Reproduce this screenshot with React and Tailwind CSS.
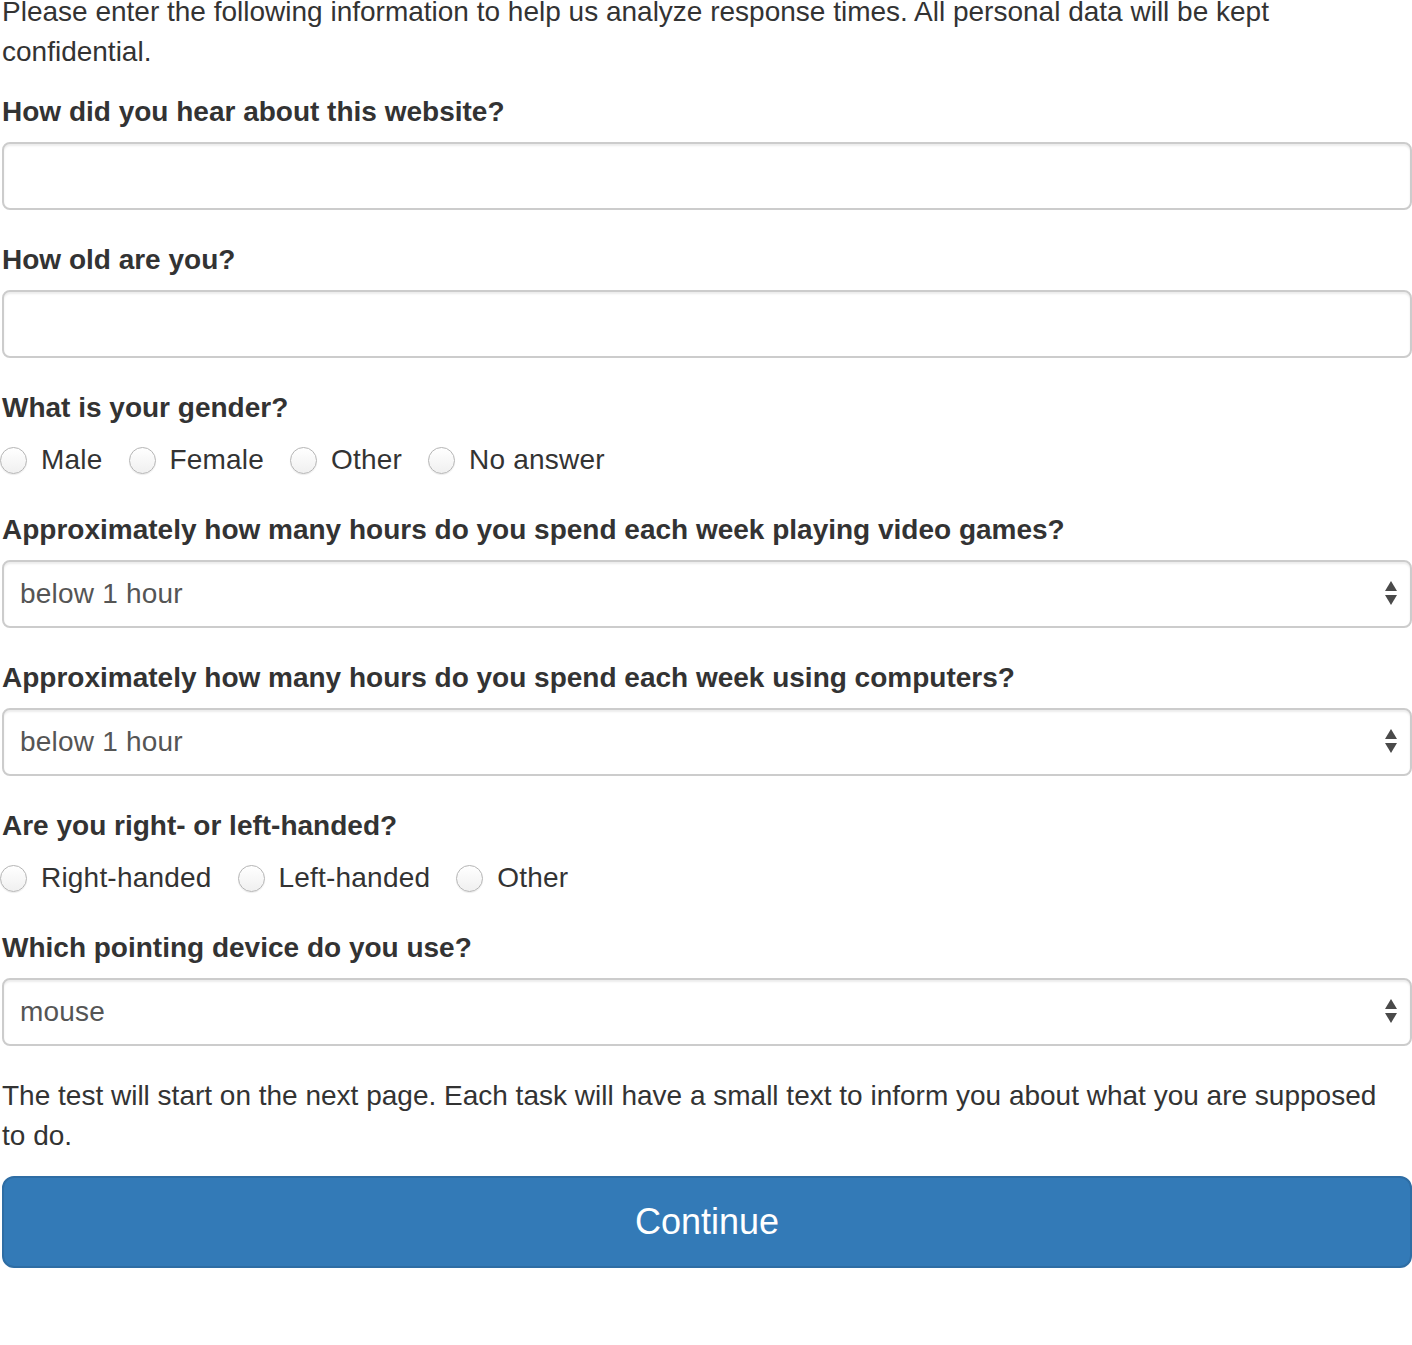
import React from "react";

const font = { fontFamily: '"Liberation Sans", Arial, Helvetica, sans-serif' };

function Label({ children }) {
  return (
    <div className="font-bold text-[28px] leading-[40px] text-[#333] mb-[10px]">{children}</div>
  );
}

function TextInput() {
  return (
    <div className="h-[68px] w-full rounded-[8px] border-2 border-[#ccc] bg-white shadow-[inset_0_2px_2px_rgba(0,0,0,0.075)]" />
  );
}

function Select({ value }) {
  return (
    <div className="h-[68px] w-full rounded-[8px] border-2 border-[#ccc] bg-white flex items-center justify-between pl-[16px] pr-[12px] shadow-[inset_0_2px_2px_rgba(0,0,0,0.075)]">
      <span className="text-[28px] leading-[40px] text-[#555] tracking-[0.2px]">{value}</span>
      <svg width="14" height="26" viewBox="0 0 14 26" className="mt-[-2px]">
        <path d="M7 1 L13 11 L1 11 Z" fill="#4a4a4a" />
        <path d="M1 15 L13 15 L7 25 Z" fill="#4a4a4a" />
      </svg>
    </div>
  );
}

function Radio({ label, first }) {
  return (
    <label className={"flex items-center " + (first ? "" : "ml-[26px]")}>
      <span className="w-[27px] h-[27px] rounded-full border border-[#b5b5b5] bg-gradient-to-b from-white to-[#f0f0f0] shadow-[0_1px_1px_rgba(0,0,0,0.08)]" />
      <span className="ml-[14px] text-[28px] leading-[40px] text-[#333] tracking-[0.2px]">{label}</span>
    </label>
  );
}

export default function App() {
  return (
    <div style={font} className="bg-white w-[1412px] h-[1345px] overflow-hidden text-[#333]">
      <div className="pl-[2px] mt-[-8px]">
        <p className="text-[28px] leading-[40px] mb-[20px] pr-[10px]">
          Please enter the following information to help us analyze response times. All personal data will be kept confidential.
        </p>

        <div className="mb-[30px]">
          <Label>How did you hear about this website?</Label>
          <TextInput />
        </div>

        <div className="mb-[30px]">
          <Label>How old are you?</Label>
          <TextInput />
        </div>

        <div className="mb-[30px]">
          <Label>What is your gender?</Label>
          <div className="pt-[2px]">
            <div className="flex items-center h-[40px] ml-[-2px]">
              <Radio label="Male" first />
              <Radio label="Female" />
              <Radio label="Other" />
              <Radio label="No answer" />
            </div>
          </div>
        </div>

        <div className="mb-[30px]">
          <Label>Approximately how many hours do you spend each week playing video games?</Label>
          <Select value="below 1 hour" />
        </div>

        <div className="mb-[30px]">
          <Label>Approximately how many hours do you spend each week using computers?</Label>
          <Select value="below 1 hour" />
        </div>

        <div className="mb-[30px]">
          <Label>Are you right- or left-handed?</Label>
          <div className="pt-[2px]">
            <div className="flex items-center h-[40px] ml-[-2px]">
              <Radio label="Right-handed" first />
              <Radio label="Left-handed" />
              <Radio label="Other" />
            </div>
          </div>
        </div>

        <div className="mb-[30px]">
          <Label>Which pointing device do you use?</Label>
          <Select value="mouse" />
        </div>

        <p className="text-[28px] leading-[40px] mb-[20px] pr-[10px]">
          The test will start on the next page. Each task will have a small text to inform you about what you are supposed to do.
        </p>

        <button className="w-full h-[92px] rounded-[12px] bg-[#337ab7] border-2 border-[#2e6da4] text-white text-[36px] leading-[48px] flex items-center justify-center">
          Continue
        </button>
      </div>
    </div>
  );
}
